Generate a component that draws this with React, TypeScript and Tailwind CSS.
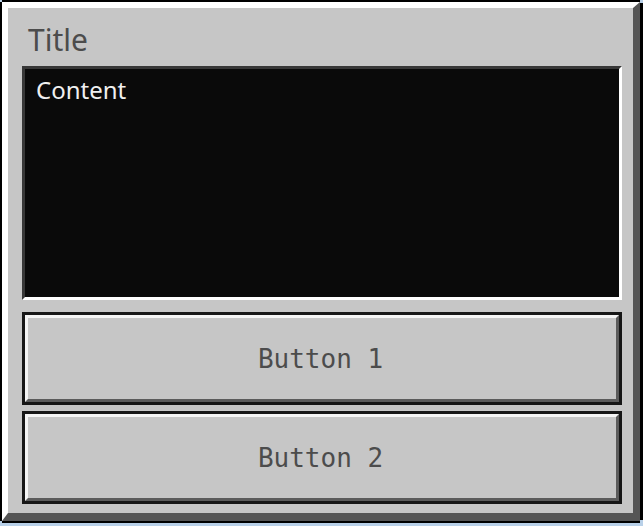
const sans = { fontFamily: '"Noto Sans", "Open Sans", sans-serif' };

function PixelButton({ label }: { label: string }) {
  return (
    <button className="flex h-[93px] w-full border-[3px] border-[#161616] bg-[#c6c6c6]">
      <span className="flex h-full w-full items-center justify-center border-t-[3px] border-l-[3px] border-t-[#f4f4f4] border-l-[#f4f4f4] border-r-[3px] border-b-[3px] border-r-[#5b5b5b] border-b-[#5b5b5b] pr-[3px] font-['DejaVu_Sans_Mono',monospace] text-[26px] leading-none text-[#4c4c4c]">
        {label}
      </span>
    </button>
  );
}

export default function App() {
  return (
    <div className="h-[526px] w-[643px] bg-[#b8d0e8]">
      <div className="relative flex h-[523px] w-[643px] border-t-2 border-l-2 border-b-2 border-r-[3px] border-black">
        <span className="absolute -top-[2px] -left-[2px] h-[2px] w-[2px] bg-[#b8d0e8]" />
        <span className="absolute -top-[2px] -right-[3px] h-[3px] w-[3px] bg-[#b8d0e8]" />
        <span className="absolute -bottom-[2px] -left-[2px] h-[2px] w-[2px] bg-[#b8d0e8]" />
        <span className="absolute -bottom-[2px] -right-[3px] h-[3px] w-[3px] bg-[#b8d0e8]" />
        <div className="flex flex-1 flex-col border-t-[6px] border-l-[6px] border-t-white border-l-white border-r-[7px] border-b-[8px] border-r-[#555555] border-b-[#555555] bg-[#c6c6c6] pl-[14px] pr-[11px] pb-[9px]">
          <div style={sans} className="pt-[12px] pb-[6px] pl-[6px] text-[30px] leading-[40px] text-[#4c4c4c]">
            Title
          </div>
          <div className="h-[234px] border-t-[3px] border-l-[3px] border-t-[#383838] border-l-[#383838] border-r-[3px] border-b-[3px] border-r-white border-b-white bg-[#0a0a0a] pl-[11px] pt-[5px]">
            <div style={sans} className="text-[24px] leading-[32px] text-[#f0f0f0]">
              Content
            </div>
          </div>
          <div className="mt-[12px] flex flex-col gap-[6px]">
            <PixelButton label="Button 1" />
            <PixelButton label="Button 2" />
          </div>
        </div>
      </div>
    </div>
  );
}
